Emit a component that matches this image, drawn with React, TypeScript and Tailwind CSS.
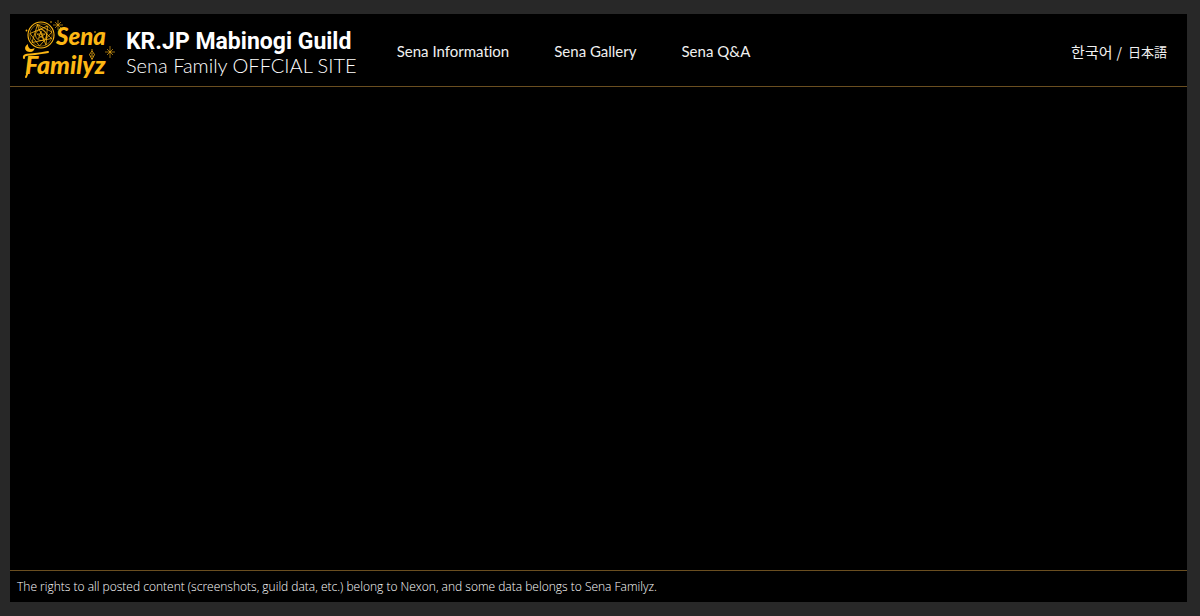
const navItems = [
  { label: 'Sena Information', href: '#information' },
  { label: 'Sena Gallery', href: '#gallery' },
  { label: 'Sena Q&A', href: '#qna' },
];

function Logo() {
  return (
    <svg viewBox="0 0 96 64" className="h-16 w-24 shrink-0" fill="none" stroke="#fdb714" role="img" aria-label="Sena Familyz">
      {/* magic circle */}
      <circle cx="19" cy="17" r="13" strokeWidth="1.1" />
      <circle cx="19" cy="17" r="11.2" strokeWidth="0.5" />
      <path d="M15 6.500 29.500 20.500 10 24.500 15.500 6.500 30 14 17.500 28 8 15.500 25.500 8 24 27Z" strokeWidth="0.8" />
      <circle cx="19" cy="17" r="5.500" strokeWidth="0.8" />
      <path d="M19 13 21.500 20.500 15 16H23L16.500 20.500Z" strokeWidth="0.7" />
      {/* stars */}
      <g strokeWidth="0.6">
        <path d="M36 2v10M31 7h10M33 4l6 6M39 4l-6 6" />
        <path d="M88 28v12M83 34h10M85 31l6 6M91 31l-6 6" />
      </g>
      <g fill="#fdb714" stroke="none">
        <circle cx="29" cy="4" r="0.8" />
        <circle cx="4.5" cy="12.500" r="0.9" />
        <circle cx="73" cy="14" r="0.8" />
        <circle cx="40" cy="12" r="0.6" />
        <path d="M6 26c-5 3-3 8 2 8 3 0 4.500-2 4.500-4-3.500 2.500-7 0-6.500-4Z" />
      </g>
      <g fill="#fdb714" stroke="none" className="font-['Lato',sans-serif] font-black italic">
        <text x="34" y="27" fontSize="24">Sena</text>
        <text x="3" y="56" fontSize="25">Familyz</text>
      </g>
      {/* swash of the F and the lantern */}
      <path d="M2 40c-1-4 5-3 11-4s9-1 13-2M6 54l-2 5" strokeWidth="2" strokeLinecap="round" />
      <path d="M70 31v2M70 33l-2.500 3.500 2.500 5 2.500-5ZM70 35v4" strokeWidth="0.8" />
    </svg>
  );
}

function Header() {
  return (
    <header className="flex h-[73px] shrink-0 items-center border-b border-[#6a4e20] pr-5 pl-3">
      <a href="#top" className="flex items-center gap-2">
        <Logo />
        <span className="flex flex-col pt-1.5 whitespace-nowrap">
          <span className="font-['Roboto',sans-serif] text-[23px] leading-6 font-bold text-white">KR.JP Mabinogi Guild</span>
          <span className="text-[20px] leading-[22px] font-light text-white">Sena Family OFFCIAL SITE</span>
        </span>
      </a>
      <nav className="ml-10 flex gap-[45px] pt-0.5 text-[15px] whitespace-nowrap">
        {navItems.map((item) => (
          <a key={item.href} href={item.href} className="hover:text-[#fdb714]">
            {item.label}
          </a>
        ))}
      </nav>
      <div className="ml-auto flex items-center gap-1 pt-1 font-['Noto_Sans_CJK_KR',sans-serif] text-[14px] whitespace-nowrap">
        <a href="#ko" lang="ko" className="text-[15px]">한국어</a>
        <span>/</span>
        <a href="#ja" lang="ja" className="pl-0.5 font-['Noto_Sans_CJK_JP',sans-serif] text-[13px]">日本語</a>
      </div>
    </header>
  );
}

export default function App() {
  return (
    <div className="flex min-h-screen bg-[#282828] pt-3.5 pr-[13px] pb-3.5 pl-2.5">
      <div className="flex flex-1 flex-col bg-black font-['Lato',sans-serif] text-[#f0f0f0] [font-variant-ligatures:none]">
        <Header />
        <main className="flex-1" />
        <footer className="border-t border-[#6a4e20] px-[7px] pt-2 pb-[7px] font-['Open_Sans',sans-serif] text-[12px] leading-4 font-light text-white">
          <p>
            The rights to all posted content (screenshots, guild data, etc.) belong to Nexon, and some data belongs to
            Sena Familyz.
          </p>
        </footer>
      </div>
    </div>
  );
}
